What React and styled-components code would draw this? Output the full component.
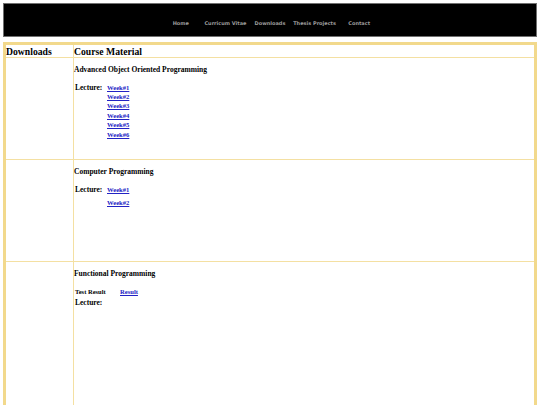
import React from 'react';
import styled, { createGlobalStyle } from 'styled-components';

const GlobalStyle = createGlobalStyle`
  body {
    margin: 3px;
    background: #ffffff;
    font-family: 'Liberation Serif', 'Times New Roman', serif;
  }
`;

const navItems = ['Home', 'Curricum Vitae', 'Downloads', 'Thesis Projects', 'Contact'];

const courses = [
  {
    title: 'Advanced Object Oriented Programming',
    weeks: ['Week#1', 'Week#2', 'Week#3', 'Week#4', 'Week#5', 'Week#6'],
    gap: 0,
  },
  {
    title: 'Computer Programming',
    weeks: ['Week#1', 'Week#2'],
    gap: 3.6,
  },
  {
    title: 'Functional Programming',
    result: true,
    weeks: [],
    tall: true,
  },
];

const App = () => {
  return (
    <>
      <GlobalStyle />
      <Header>
        <Nav>
          {navItems.map((item) => (
            <NavItem key={item}>{item}</NavItem>
          ))}
        </Nav>
      </Header>
      <Table>
        <thead>
          <tr>
            <HeadCell $first>Downloads</HeadCell>
            <HeadCell>Course Material</HeadCell>
          </tr>
        </thead>
        <tbody>
          {courses.map((c) => (
            <Row key={c.title} $tall={c.tall}>
              <Cell $first />
              <Cell>
                <Title>{c.title}</Title>
                {c.result && (
                  <ResultLine>
                    <ResultLabel>Test Result</ResultLabel>
                    <Link href="#">Result</Link>
                  </ResultLine>
                )}
                <Lecture $tight={c.result}>
                  <Label>Lecture:</Label>
                  <Weeks $gap={c.gap}>
                    {c.weeks.map((w) => (
                      <Link key={w} href="#">
                        {w}
                      </Link>
                    ))}
                  </Weeks>
                </Lecture>
              </Cell>
            </Row>
          ))}
        </tbody>
      </Table>
    </>
  );
};

export default App;

const Header = styled.div`
  height: 32px;
  border: 1px solid #707070;
  background: #000000;
  display: flex;
  justify-content: center;
  align-items: center;
`;

const Nav = styled.ul`
  display: flex;
  margin: 6px 0 0;
  padding: 0;
  list-style: none;
`;

const NavItem = styled.li`
  width: 44.6px;
  text-align: center;
  font-family: 'DejaVu Sans', Verdana, sans-serif;
  font-weight: bold;
  font-size: 5px;
  color: #9a9a9a;
  white-space: nowrap;
`;

const Table = styled.table`
  margin-top: 5px;
  width: 534px;
  border-collapse: collapse;
  border: 3px solid #f2d98c;
`;

const HeadCell = styled.th`
  height: 12px;
  width: ${({ $first }) => ($first ? '67px' : 'auto')};
  border: 1px solid #f4e0a2;
  padding: 0;
  text-align: left;
  vertical-align: middle;
  font-size: 9.7px;
  line-height: 11px;
  font-weight: bold;
  color: #000;
`;

const Row = styled.tr`
  height: ${({ $tall }) => ($tall ? '160px' : '102px')};
`;

const Cell = styled.td`
  border: 1px solid #f4e0a2;
  vertical-align: top;
  padding: 7px 0 0;
`;

const Title = styled.div`
  font-size: 7.5px;
  line-height: 9px;
  font-weight: bold;
  color: #000;
`;

const ResultLine = styled.div`
  display: flex;
  align-items: baseline;
  margin-top: 9px;
  padding-left: 1px;
  line-height: 9px;
`;

const ResultLabel = styled.span`
  width: 45px;
  font-size: 6.5px;
  font-weight: bold;
  color: #000;
`;

const Lecture = styled.div`
  display: flex;
  align-items: baseline;
  margin-top: ${({ $tight }) => ($tight ? '2px' : '8.5px')};
  padding-left: 1px;
`;

const Label = styled.span`
  width: 32px;
  font-size: 7.5px;
  line-height: 9.4px;
  font-weight: bold;
  color: #000;
`;

const Weeks = styled.div`
  display: flex;
  flex-direction: column;
  gap: ${({ $gap }) => $gap}px;
`;

const Link = styled.a`
  font-size: 6.6px;
  line-height: 9.4px;
  font-weight: bold;
  color: #2222c4;
  text-decoration: underline;
`;
